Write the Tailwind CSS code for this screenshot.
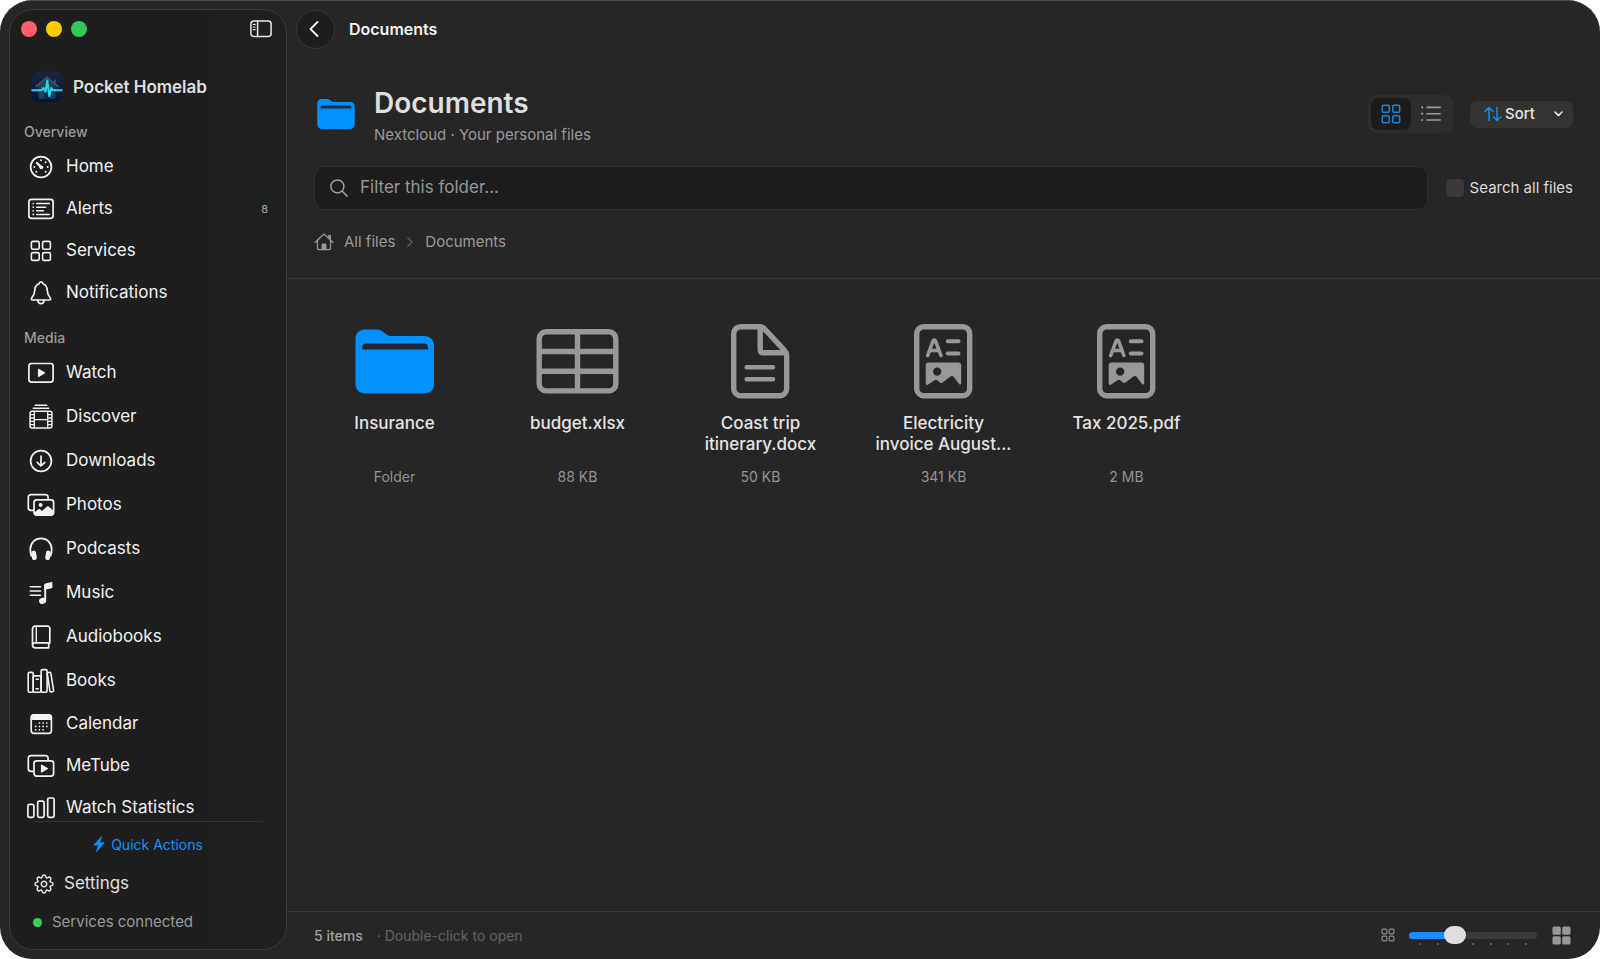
<!DOCTYPE html>
<html lang="en">
<head>
<meta charset="utf-8">
<meta name="viewport" content="width=device-width, initial-scale=1">
<title>Pocket Homelab – Documents</title>
<script src="https://cdn.jsdelivr.net/npm/@tailwindcss/browser@4"></script>
</head>
<body class="bg-white font-[Inter,'Liberation_Sans',sans-serif] text-[#e4e4e4] antialiased">
<div class="flex h-screen overflow-hidden rounded-[32px] border-t border-[#484848] bg-[#262626]">

  <!-- Sidebar -->
  <aside class="mt-2 mb-[9px] ml-[9px] flex w-[278px] shrink-0 flex-col overflow-hidden rounded-[24px] border border-[#3c3c3c] bg-[#1e1e1e] bg-linear-to-r from-[#1e1e1e] from-70% to-[#1e2122]">
    <div class="flex h-[38px] shrink-0 items-center justify-between pr-[14px] pl-[11px]">
      <div class="flex gap-[9px]">
        <button aria-label="Close" class="size-4 rounded-full bg-[#ff5f67]"></button>
        <button aria-label="Minimise" class="size-4 rounded-full bg-[#ffcc00]"></button>
        <button aria-label="Zoom" class="size-4 rounded-full bg-[#34c759]"></button>
      </div>
      <button aria-label="Toggle sidebar">
        <svg class="h-[18px] w-[22px]" viewBox="0 0 22 18" fill="none" stroke="#e8e8e8" stroke-width="1.5" stroke-linecap="round"><rect x=".9" y="1" width="20.2" height="15.6" rx="3"/><path d="M7.6 1v15.6"/><path d="M3.3 4.4h1.8M3.3 7h1.8M3.3 9.6h1.8" stroke-width="1.2"/></svg>
      </button>
    </div>

    <div class="mt-[23px] flex h-8 shrink-0 items-center gap-[10px] pl-[21px]">
      <svg class="size-8" viewBox="0 0 32 32" fill="none"><defs><linearGradient id="brand" x1="0" y1="0" x2="0" y2="1"><stop offset="0" stop-color="#1b2544"/><stop offset="1" stop-color="#0a1630"/></linearGradient></defs><rect x=".5" y=".5" width="31" height="31" rx="7" fill="url(#brand)"/><path d="M7.500 14.500v13h17v-13L16 8z" fill="#1c4258"/><path d="M4.500 16 16 6.500l11.500 9.500M24 8.500v4" stroke="#3a5568" stroke-width="1.800"/><path d="M13.500 27.500v-5h5v5" fill="#0f2a44"/><path d="M.5 19.300h10l2-2.300 2 3.500 1.800-11 2 15.500 2-8 1.500 2.300h9.700" stroke="#2ed3ea" stroke-width="2" stroke-linejoin="round"/></svg>
      <h1 class="text-[17px] leading-7 font-semibold text-[#dedede]">Pocket Homelab</h1>
    </div>

    <nav class="mt-4 min-h-0 flex-1 overflow-hidden text-[17px] text-[#f2f2f2]">
      <h2 class="flex h-6 items-center pl-[14px] text-[14px] font-medium text-[#9b9b9b]">Overview</h2>
      <ul class="pt-[3px]">
        <li><a href="#home" class="flex h-[42px] items-center gap-[11px] pr-[18px] pl-[17px]">
          <svg class="size-7" viewBox="0 0 28 28" fill="none" stroke="currentColor" stroke-width="1.8" stroke-linecap="round"><circle cx="14" cy="14" r="10.4"/><path d="M10 10l4 4" stroke-width="2.400"/><circle cx="14.300" cy="14.300" r="1.900" fill="currentColor" stroke="none"/><path d="M14 7.300v.01M18.700 9.300v.01M20.700 14v.01M18.700 18.700v.01M7.300 14v.01M9.300 18.700v.01" stroke-width="1.900"/></svg>
          Home</a></li>
        <li><a href="#alerts" class="flex h-[42px] items-center gap-[11px] pr-[18px] pl-[17px]">
          <svg class="size-7" viewBox="0 0 28 28" fill="none" stroke="currentColor" stroke-width="1.7" stroke-linecap="round"><rect x="1.900" y="4.400" width="24.200" height="19" rx="2.600"/><path d="M9.700 8.600h12.600M9.700 12.200h9M9.700 15.800h6.600M9.700 19.400h12.600" stroke-width="1.500"/><path d="M6.300 8.600v.01M6.300 12.200v.01M6.300 15.800v.01M6.300 19.400v.01"/></svg>
          Alerts<span class="ml-auto text-[11px] text-[#a8a8a8]">8</span></a></li>
        <li><a href="#services" class="flex h-[42px] items-center gap-[11px] pr-[18px] pl-[17px]">
          <svg class="size-7" viewBox="0 0 28 28" fill="none" stroke="currentColor" stroke-width="1.600"><rect x="4.400" y="4.400" width="7.800" height="7.800" rx="1.500"/><rect x="15.600" y="4.400" width="7.800" height="7.800" rx="1.500"/><rect x="4.400" y="15.600" width="7.800" height="7.800" rx="1.500"/><rect x="15.600" y="15.600" width="7.800" height="7.800" rx="1.500"/></svg>
          Services</a></li>
        <li><a href="#notifications" class="flex h-[42px] items-center gap-[11px] pr-[18px] pl-[17px]">
          <svg class="size-7" viewBox="0 0 28 28" fill="none" stroke="currentColor" stroke-width="1.700" stroke-linejoin="round"><path d="M12 4.800c.3-1.200 1.100-1.900 2-1.900s1.700.7 2 1.900c2.700.9 4 3.200 4.200 6.400.2 3.600.9 5.100 3 7.500.9 1 .4 2.300-.9 2.300H5.700c-1.300 0-1.800-1.300-.9-2.300 2.100-2.400 2.800-3.900 3-7.500C8 8 9.300 5.700 12 4.800z"/><path d="M10.800 21.300c.3 2.200 1.600 3.300 3.200 3.300s2.900-1.100 3.200-3.300" stroke-linecap="round"/></svg>
          Notifications</a></li>
      </ul>

      <h2 class="mt-[11px] flex h-6 items-center pl-[14px] text-[14px] font-medium text-[#9b9b9b]">Media</h2>
      <ul class="pt-[2px]">
        <li><a href="#watch" class="flex h-11 items-center gap-[11px] pr-[18px] pl-[17px]">
          <svg class="size-7" viewBox="0 0 28 28" fill="none" stroke="currentColor" stroke-width="1.700"><rect x="1.900" y="4.500" width="24.200" height="18.600" rx="2.600"/><path d="M11.400 10.100v7.600l6.400-3.800z" fill="currentColor" stroke-width="1" stroke-linejoin="round"/></svg>
          Watch</a></li>
        <li><a href="#discover" class="flex h-11 items-center gap-[11px] pr-[18px] pl-[17px]">
          <svg class="size-7" viewBox="0 0 28 28" fill="none" stroke="currentColor" stroke-width="1.500" stroke-linecap="round"><path d="M8.200 2.200h11.600M6.300 5.300h15.400"/><rect x="3.100" y="8.300" width="21.800" height="16.800" rx="2"/><path d="M7.300 8.300v16.800M20.700 8.300v16.800M7.300 16.700h13.400M3.500 11.700h3.500M3.500 15h3.500M3.500 18.400h3.500M3.500 21.700h3.500M21 11.700h3.500M21 15h3.500M21 18.400h3.500M21 21.700h3.500" stroke-width="1.300"/></svg>
          Discover</a></li>
        <li><a href="#downloads" class="flex h-11 items-center gap-[11px] pr-[18px] pl-[17px]">
          <svg class="size-7" viewBox="0 0 28 28" fill="none" stroke="currentColor" stroke-width="1.700" stroke-linecap="round" stroke-linejoin="round"><circle cx="14" cy="14" r="10.400"/><path d="M14 9v9.800M10.200 15.300l3.800 3.700 3.800-3.700"/></svg>
          Downloads</a></li>
        <li><a href="#photos" class="flex h-11 items-center gap-[11px] pr-[18px] pl-[17px]">
          <svg class="size-7" viewBox="0 0 28 28" fill="none" stroke="currentColor" stroke-width="1.700"><path d="M6.300 19.300H3.900a2.600 2.600 0 0 1-2.600-2.600V6.300a2.600 2.600 0 0 1 2.600-2.600h14.600a2.600 2.600 0 0 1 2.600 2.600v2.200"/><rect x="7" y="8.800" width="19.600" height="15.400" rx="2.600"/><path d="M7.200 21.500l4.200-3.300c.6-.4 1.200-.4 1.700 0l1.900 1.700 4.700-4.200c.7-.6 1.500-.6 2.200 0l4.700 4.200v2.600a1.700 1.700 0 0 1-1.700 1.700H8.900a1.700 1.700 0 0 1-1.700-1.700z" fill="currentColor" stroke="none"/><circle cx="13.600" cy="14.100" r="2" fill="currentColor" stroke="none"/></svg>
          Photos</a></li>
        <li><a href="#podcasts" class="flex h-11 items-center gap-[11px] pr-[18px] pl-[17px]">
          <svg class="size-7" viewBox="0 0 28 28" fill="none" stroke="currentColor" stroke-width="1.800"><path d="M4.700 21.500C3.700 19.500 3.200 17 3.300 14 3.600 7.700 8 3.300 14 3.300S24.400 7.700 24.700 14c.1 3-.4 5.500-1.400 7.500"/><rect x="4.600" y="15.600" width="4.800" height="9.400" rx="2.200" transform="rotate(-10 7 20.300)" fill="currentColor" stroke="none"/><rect x="18.600" y="15.600" width="4.800" height="9.400" rx="2.200" transform="rotate(10 21 20.300)" fill="currentColor" stroke="none"/></svg>
          Podcasts</a></li>
        <li><a href="#music" class="flex h-11 items-center gap-[11px] pr-[18px] pl-[17px]">
          <svg class="size-7" viewBox="0 0 28 28" fill="none" stroke="currentColor" stroke-width="1.600" stroke-linecap="round"><path d="M3.300 7.700h10.200M3.300 12h10.200M3.300 16.200h10.200"/><path d="M18.200 21.500V6.300" stroke-width="1.900"/><path d="M17.300 5.900c0-.8.4-1.300 1.200-1.500l5.800-1.400c.7-.2 1.100.1 1.100.8v4.400c0 .6-.3.900-.9 1.100l-7.200 1.700z" fill="currentColor" stroke="none"/><ellipse cx="15.600" cy="21.900" rx="3.600" ry="3" transform="rotate(-18 15.600 21.900)" fill="currentColor" stroke="none"/></svg>
          Music</a></li>
        <li><a href="#audiobooks" class="flex h-11 items-center gap-[11px] pr-[18px] pl-[17px]">
          <svg class="size-7" viewBox="0 0 28 28" fill="none" stroke="currentColor" stroke-width="1.700" stroke-linecap="round"><path d="M22.800 19.900V5.300a2.200 2.200 0 0 0-2.200-2.200H8.200a2.700 2.700 0 0 0-2.700 2.700v16.100a2.900 2.900 0 0 0 2.900 2.900h13.300M22.800 19.900H8.200a2.500 2.500 0 0 0-2.600 2.200M21.700 20v4.800"/><path d="M9.300 3.200v16.600" stroke-width="1.400"/></svg>
          Audiobooks</a></li>
        <li><a href="#books" class="flex h-11 items-center gap-[11px] pr-[18px] pl-[17px]">
          <svg class="size-7" viewBox="0 0 28 28" fill="none" stroke="currentColor" stroke-width="1.600" stroke-linejoin="round"><rect x="1.200" y="5.400" width="5" height="19.800" rx="1.400"/><rect x="6.200" y="8.900" width="7.900" height="16.300" rx="1.400"/><rect x="14.100" y="2.600" width="6" height="22.600" rx="1.400"/><path d="M20.300 6.700c-.1-.7.200-1 .8-1.200l1.600-.2c.6-.1 1 .2 1.100.8l2.800 17.300c.1.700-.2 1-.8 1.200l-1.800.3c-.6.100-1-.2-1.100-.9z"/><path d="M8.600 12.200h3.200M8.600 21.800h3.200" stroke-width="1.400"/></svg>
          Books</a></li>
        <li><a href="#calendar" class="flex h-[42px] items-center gap-[11px] pr-[18px] pl-[17px]">
          <svg class="size-7" viewBox="0 0 28 28" fill="none" stroke="currentColor" stroke-width="1.700"><rect x="4.200" y="4.900" width="20.200" height="18.400" rx="2.800"/><path d="M3.700 10V7.500A3.200 3.200 0 0 1 6.900 4.300h14.800a3.200 3.200 0 0 1 3.200 3.200V10z" fill="currentColor" stroke="none"/><path d="M12.400 13v.01M16.100 13v.01M19.800 13v.01M8.700 16.400v.01M12.400 16.400v.01M16.100 16.400v.01M19.800 16.400v.01M8.700 19.800v.01M12.400 19.800v.01M16.100 19.800v.01" stroke-linecap="round"/></svg>
          Calendar</a></li>
        <li><a href="#metube" class="flex h-[42px] items-center gap-[11px] pr-[18px] pl-[17px]">
          <svg class="size-7" viewBox="0 0 28 28" fill="none" stroke="currentColor" stroke-width="1.700"><path d="M6.300 19.300H3.900a2.600 2.600 0 0 1-2.600-2.600V6.300a2.600 2.600 0 0 1 2.600-2.600h14.600a2.600 2.600 0 0 1 2.600 2.600v2.200"/><rect x="7" y="8.800" width="19.600" height="15.400" rx="2.600"/><path d="M14.400 12.900v7.400l6.300-3.700z" fill="currentColor" stroke-width="1" stroke-linejoin="round"/></svg>
          MeTube</a></li>
        <li><a href="#stats" class="flex h-[42px] items-center gap-[11px] pr-[18px] pl-[17px]">
          <svg class="size-7" viewBox="0 0 28 28" fill="none" stroke="currentColor" stroke-width="1.700"><rect x=".9" y="10.300" width="6" height="13" rx="1.600"/><rect x="10.700" y="7.200" width="6.400" height="16.100" rx="1.600"/><rect x="20.700" y="4" width="6.400" height="19.300" rx="1.600"/></svg>
          Watch Statistics</a></li>
      </ul>
    </nav>

    <div class="shrink-0 pb-[15px]">
      <hr class="mr-6 ml-6 border-[#353535]">
      <button class="mt-[10px] flex h-6 w-full items-center justify-center gap-[6px] text-[14px] text-[#1790f5]">
        <svg class="h-4 w-3" viewBox="0 0 12 16" fill="currentColor"><path d="M8.300.5.900 8.700c-.4.500-.2.900.4.900h3.900l-2 5.400c-.2.700.4.900.8.400l7.200-8.200c.4-.5.200-.9-.4-.9H7l2-5.400C9.200.2 8.700 0 8.300.5z"/></svg>
        Quick Actions</button>
      <button class="mt-[14px] flex h-7 w-full items-center gap-[10px] pl-6 text-[17px] text-[#e0e0e0]">
        <svg class="size-5" viewBox="-10 -10 20 20" fill="none" stroke="currentColor" stroke-width="1.500" stroke-linecap="round"><defs><path id="tooth" d="M-2.530-6.100C-1.500-6.500-2.300-9 0-9S1.500-6.500 2.530-6.100"/></defs><use href="#tooth"/><use href="#tooth" transform="rotate(45)"/><use href="#tooth" transform="rotate(90)"/><use href="#tooth" transform="rotate(135)"/><use href="#tooth" transform="rotate(180)"/><use href="#tooth" transform="rotate(225)"/><use href="#tooth" transform="rotate(270)"/><use href="#tooth" transform="rotate(315)"/><circle r="2.700"/></svg>
        Settings</button>
      <p class="mt-3 flex h-6 items-center gap-[10px] pl-[23px] text-[15px] text-[#9a9a9a]"><span class="size-[9px] rounded-full bg-[#32d158]"></span>Services connected</p>
    </div>
  </aside>

  <!-- Main column -->
  <main class="flex min-w-0 flex-1 flex-col">
    <div class="flex h-14 shrink-0 items-center gap-[14px] pl-[9px]">
      <button aria-label="Back" class="flex size-[39px] items-center justify-center rounded-full border border-[#383838] bg-[#1e1e1e]">
        <svg class="mr-[3px] h-4 w-[10px]" viewBox="0 0 10 16" fill="none" stroke="#f0f0f0" stroke-width="1.800" stroke-linecap="round" stroke-linejoin="round"><path d="M8.500 1 1.500 8l7 7"/></svg>
      </button>
      <span class="text-[16px] font-semibold text-[#f2f2f2]">Documents</span>
    </div>

    <header class="shrink-0 border-b border-[#3a3a3a] px-[27px] pt-[25px] pb-[26px]">
      <div class="flex items-center">
        <svg class="mr-[19px] ml-[3px] h-[30px] w-[38px]" viewBox="0 0 80 64" fill="#0091ff"><path d="M0 10C0 4 4 0 9.500 0h11c4 0 5.500 1 8.500 3.500C32 6 33 6.500 37 6.500h33c6 0 10 4 10 9.500v38c0 6-4 10-10 10H10C4 64 0 60 0 54z"/><path d="M7 20v-2a4 4 0 0 1 4-4h58a4 4 0 0 1 4 4v2z" fill="#1b3246"/></svg>
        <div class="flex-1">
          <h2 class="pt-1 text-[28px] leading-[34px] font-semibold text-[#dfdfdf]">Documents</h2>
          <p class="mt-1 text-[15px] leading-[22px] text-[#9a9a9a]">Nextcloud · Your personal files</p>
        </div>
        <div class="mr-4 flex rounded-[9px] bg-[#2d2d2d] p-[3px]" role="group" aria-label="View">
          <button aria-label="Grid view" aria-pressed="true" class="flex h-8 w-10 items-center justify-center rounded-[7px] bg-[#1c1c1c]">
            <svg class="size-5" viewBox="0 0 20 20" fill="none" stroke="#1985dc" stroke-width="1.500"><rect x="1.300" y="1.300" width="7" height="7" rx="1.300"/><rect x="11.700" y="1.300" width="7" height="7" rx="1.300"/><rect x="1.300" y="11.700" width="7" height="7" rx="1.300"/><rect x="11.700" y="11.700" width="7" height="7" rx="1.300"/></svg>
          </button>
          <button aria-label="List view" aria-pressed="false" class="flex h-8 w-10 items-center justify-center">
            <svg class="size-5" viewBox="0 0 20 20" fill="none" stroke="#9a9a9a" stroke-width="1.600" stroke-linecap="round"><path d="M6 3.400h13.200M6 9.700h13.200M6 16h13.200"/><path d="M1.200 3.400v.01M1.200 9.700v.01M1.200 16v.01" stroke-width="2.200"/></svg>
          </button>
        </div>
        <button class="flex h-[27px] w-[103px] items-center rounded-[7px] bg-[#333331] pr-[10px] pl-[14px] text-[15px] font-medium text-[#e6e6e6]">
          <svg class="mr-[3px] h-4 w-[18px]" viewBox="0 0 18 16" fill="none" stroke="#1b8cea" stroke-width="1.500" stroke-linecap="round" stroke-linejoin="round"><path d="M5 14.500V1.500M1 5.500l4-4 4 4M13 1.500v13M9.500 10.800l3.500 3.700 4-3.700"/></svg>
          Sort
          <svg class="ml-auto h-[6px] w-[9px]" viewBox="0 0 9 6" fill="none" stroke="#e6e6e6" stroke-width="1.600" stroke-linecap="round" stroke-linejoin="round"><path d="M1 1l3.500 3.600L8 1"/></svg>
        </button>
      </div>

      <div class="mt-5 flex items-center gap-[18px]">
        <div class="flex h-11 flex-1 items-center gap-3 rounded-[10px] border border-[#313131] bg-[#1d1d1d] pr-3 pl-[15px]">
          <svg class="size-[18px]" viewBox="0 0 18 18" fill="none" stroke="#a0a0a0" stroke-width="1.500" stroke-linecap="round"><circle cx="7.400" cy="7.400" r="6.500"/><path d="M12.300 12.300l4.800 4.800"/></svg>
          <input type="text" aria-label="Filter this folder" placeholder="Filter this folder..." class="min-w-0 flex-1 bg-transparent text-[17px] outline-none placeholder:text-[#989898]">
        </div>
        <label class="flex items-center gap-[6px] text-[15px] text-[#dcdcdc]">
          <input type="checkbox" class="size-[18px] appearance-none rounded-[5px] bg-[#3a3a3a] checked:bg-[#0a84ff]">
          Search all files
        </label>
      </div>

      <nav aria-label="Breadcrumb" class="mt-[22px] flex h-5 items-center text-[15px] text-[#9a9a9a]">
        <a href="#files" class="flex items-center gap-[10px]">
          <svg class="h-[18px] w-5" viewBox="0 0 20 18" fill="none" stroke="currentColor" stroke-width="1.300" stroke-linecap="round" stroke-linejoin="round"><path d="M1.200 9.200 9.200 1.700c.5-.5 1.100-.5 1.600 0l8 7.500M3.500 7.500v7.700c0 .9.500 1.500 1.500 1.500h10c1 0 1.500-.6 1.500-1.500V7.500M16.300 6.300V2.600h-1.500v2.300"/><path d="M7.600 16.700v-5.300c0-.5.300-.8.800-.8h3.200c.5 0 .8.300.8.800v5.300z" fill="currentColor" stroke="none"/></svg>
          All files</a>
        <svg class="mx-3 h-[10px] w-[6px]" viewBox="0 0 6 10" fill="none" stroke="#5c5c5c" stroke-width="1.300" stroke-linecap="round" stroke-linejoin="round"><path d="M.8.800 5 5 .8 9.200"/></svg>
        <a href="#documents">Documents</a>
      </nav>
    </header>

    <ul class="grid min-h-0 flex-1 grid-cols-[repeat(auto-fill,minmax(150px,1fr))] content-start gap-[22px] overflow-hidden px-[27px] pt-[42px] text-center text-[17px] leading-[21px] font-medium">
      <li class="flex flex-col items-center">
        <svg class="h-20 w-[84px]" viewBox="0 0 84 80"><path d="M2.500 18c0-6 4-9.500 9.500-9.500h11c4 0 5.500 1 8.500 3.500s4.500 3 8.500 3h31c6 0 10 4 10 9.500V63c0 6-4 9.500-10 9.500H12.500c-6 0-10-3.500-10-9.500z" fill="#0091ff"/><path d="M9 28.500v-2a4 4 0 0 1 4-4h58a4 4 0 0 1 4 4v2z" fill="#1d2832"/></svg>
        <h3 class="mt-3 h-[42px]">Insurance</h3>
        <p class="mt-[11px] text-[14px] font-normal text-[#949494]">Folder</p>
      </li>
      <li class="flex flex-col items-center">
        <svg class="h-20 w-[84px]" viewBox="0 0 84 80" fill="none" stroke="#989898" stroke-width="5.400"><rect x="3.200" y="10.700" width="76.600" height="59.200" rx="7"/><path d="M41.500 10.700v59.200M3.200 30.500h76.600M3.200 50.200h76.600"/></svg>
        <h3 class="mt-3 h-[42px]">budget.xlsx</h3>
        <p class="mt-[11px] text-[14px] font-normal text-[#949494]">88 KB</p>
      </li>
      <li class="flex flex-col items-center">
        <svg class="h-20 w-[84px]" viewBox="0 0 84 80" fill="none" stroke="#989898" stroke-width="5.400" stroke-linejoin="round"><g transform="translate(-.8 0)"><path d="M42 5.700H22.500a7 7 0 0 0-7 7v55a7 7 0 0 0 7 7h39a7 7 0 0 0 7-7V34.500c0-2.500-.5-3.500-2.200-5.200L46.500 8.200C44.800 6.400 44 5.700 42 5.700z"/><path d="M42 7v21.500c0 2.300 1 3.300 3.300 3.300H68"/><path d="M28.500 46.300h26.300M28.500 58.300h26.300" stroke-width="4.600" stroke-linecap="round"/></g></svg>
        <h3 class="mt-3 h-[42px]">Coast trip<br>itinerary.docx</h3>
        <p class="mt-[11px] text-[14px] font-normal text-[#949494]">50 KB</p>
      </li>
      <li class="flex flex-col items-center">
        <svg class="h-20 w-[84px]" viewBox="0 0 84 80" fill="none" stroke="#989898" stroke-width="5.400"><defs><g id="richtext"><rect x="15.500" y="5.700" width="53" height="69" rx="7"/><path d="M26.500 34.500l5.400-14.600c.5-1.200 1.900-1.200 2.400 0l5.400 14.600M28.300 29.500h9.600" stroke-width="3.600" stroke-linecap="round" stroke-linejoin="round"/><path d="M46.500 20.200h10.800M46.500 32.400h10.800" stroke-width="4" stroke-linecap="round"/><path fill-rule="evenodd" d="M24.500 44.500c0-2 1-3 3-3H57c2 0 3 1 3 3V62.300c0 1.300-1.300 1.600-2.200.6l-5.200-6.900c-1.200-1.400-2.800-1.400-4 0l-7.300 5.500c-.8.700-1.600.7-2.500 0L36.300 59.500c-1.100-.9-2.200-.9-3.300 0l-6 4c-1 .8-2.500.4-2.500-1zM40.200 50.600a4.200 4.200 0 1 0-8.400 0 4.200 4.200 0 0 0 8.400 0z" fill="#989898" stroke="none"/></g></defs><use href="#richtext" x="-.8"/></svg>
        <h3 class="mt-3 h-[42px]">Electricity<br>invoice August...</h3>
        <p class="mt-[11px] text-[14px] font-normal text-[#949494]">341 KB</p>
      </li>
      <li class="flex flex-col items-center">
        <svg class="h-20 w-[84px]" viewBox="0 0 84 80" fill="none" stroke="#989898" stroke-width="5.400"><use href="#richtext" x="-.8"/></svg>
        <h3 class="mt-3 h-[42px]">Tax 2025.pdf</h3>
        <p class="mt-[11px] text-[14px] font-normal text-[#949494]">2 MB</p>
      </li>
    </ul>

    <footer class="flex h-12 shrink-0 items-center border-t border-[#3a3a3a] pb-px pr-[29px] pl-[27px] text-[14px]">
      <span class="font-medium text-[#a3a3a3]">5 items</span>
      <span class="ml-[14px] text-[#636363]">· Double-click to open</span>
      <svg class="mr-[14px] ml-auto size-[14px]" viewBox="0 0 14 14" fill="none" stroke="#8c8c8c" stroke-width="1.200"><rect x="1.100" y="1.100" width="4.700" height="4.700" rx="1"/><rect x="8.200" y="1.100" width="4.700" height="4.700" rx="1"/><rect x="1.100" y="8.200" width="4.700" height="4.700" rx="1"/><rect x="8.200" y="8.200" width="4.700" height="4.700" rx="1"/></svg>
      <div class="relative mr-[15px] flex w-32 items-center">
        <input type="range" min="0" max="6" value="2" aria-label="Icon size" class="h-[7px] w-full appearance-none rounded-full bg-linear-to-r from-[#1a8cff] from-36% to-[#3a3a3a] to-36% [&::-webkit-slider-thumb]:h-[18px] [&::-webkit-slider-thumb]:w-[22px] [&::-webkit-slider-thumb]:appearance-none [&::-webkit-slider-thumb]:rounded-full [&::-webkit-slider-thumb]:bg-[#dedede]">
        <div class="absolute inset-x-[10px] top-[11px] flex justify-between">
          <i class="size-[2px] rounded-full bg-[#6a6a6a]"></i><i class="size-[2px] rounded-full bg-[#6a6a6a]"></i><i class="size-[2px]"></i><i class="size-[2px] rounded-full bg-[#6a6a6a]"></i><i class="size-[2px] rounded-full bg-[#6a6a6a]"></i><i class="size-[2px] rounded-full bg-[#6a6a6a]"></i><i class="size-[2px] rounded-full bg-[#6a6a6a]"></i>
        </div>
      </div>
      <svg class="size-[19px]" viewBox="0 0 19 19" fill="#989898"><rect x=".5" y=".5" width="8.300" height="8.300" rx="1.600"/><rect x="10.200" y=".5" width="8.300" height="8.300" rx="1.600"/><rect x=".5" y="10.200" width="8.300" height="8.300" rx="1.600"/><rect x="10.200" y="10.200" width="8.300" height="8.300" rx="1.600"/></svg>
    </footer>
  </main>
</div>
</body>
</html>
